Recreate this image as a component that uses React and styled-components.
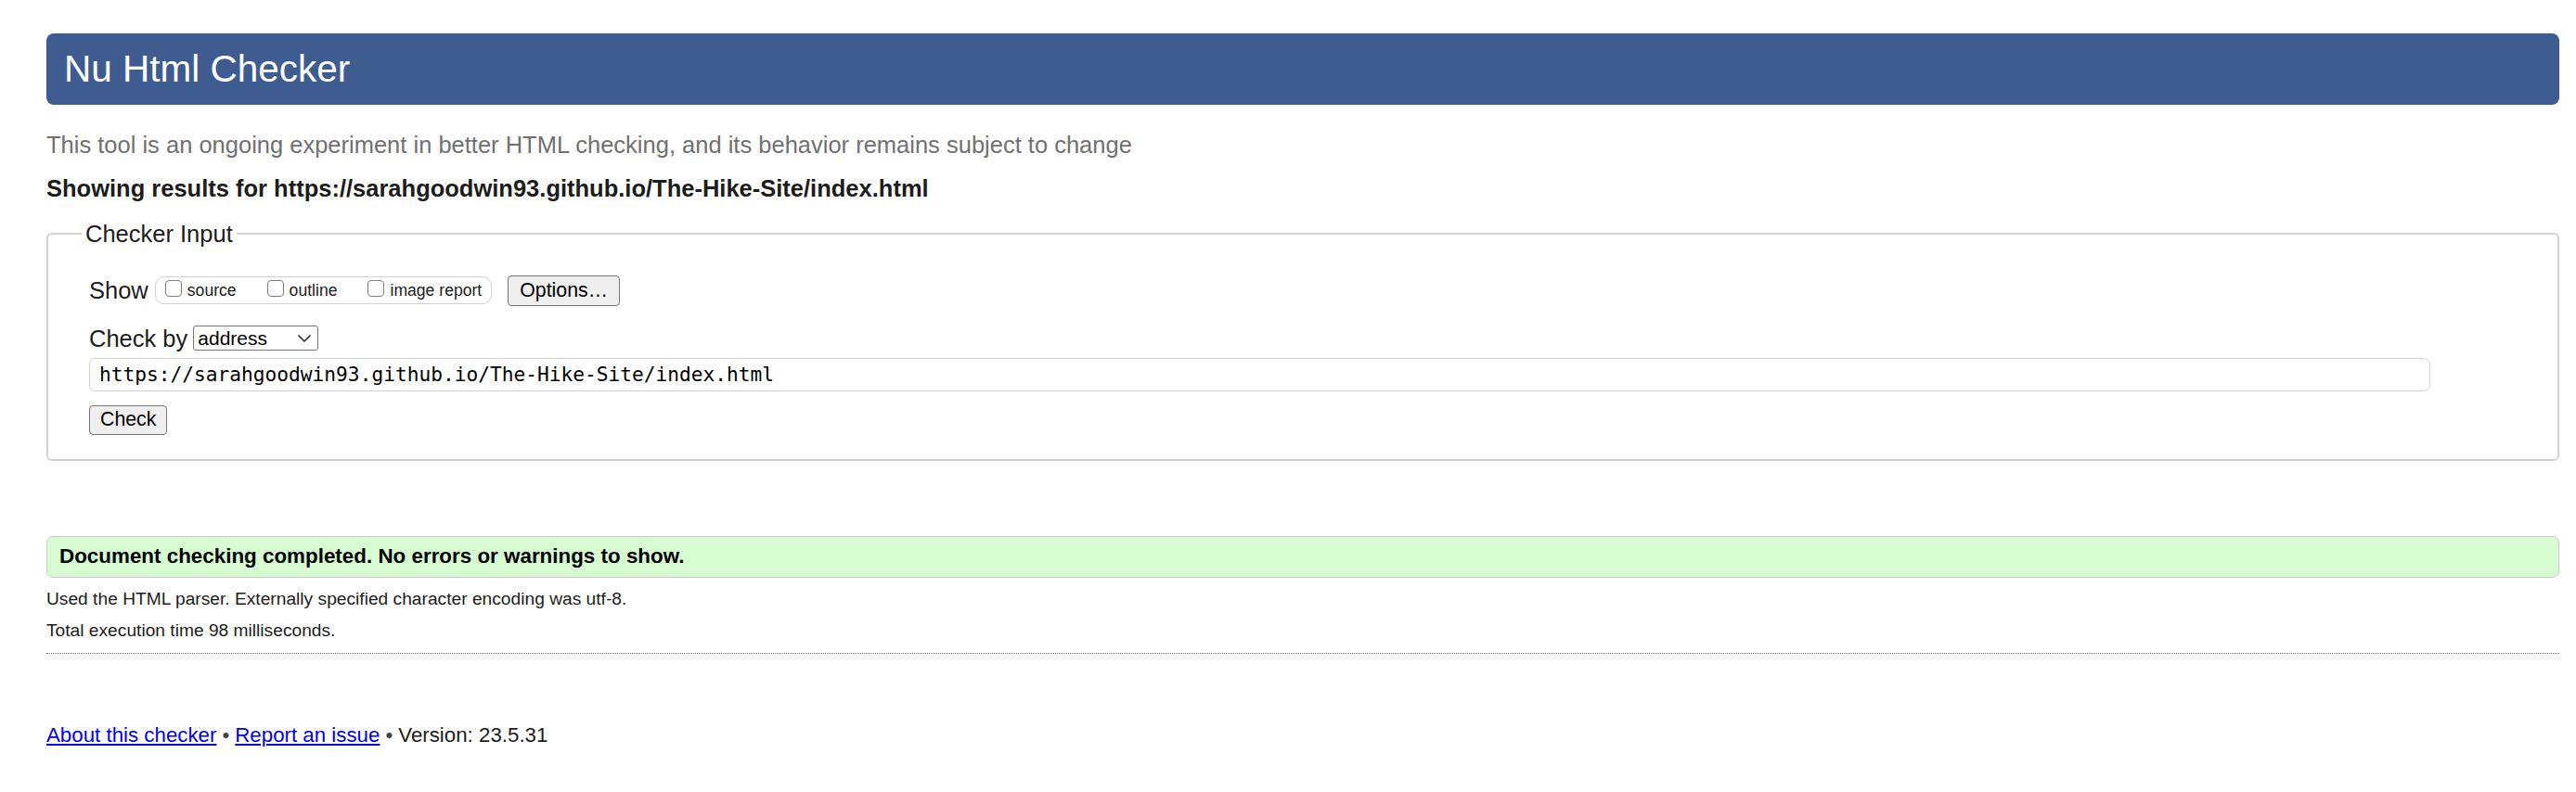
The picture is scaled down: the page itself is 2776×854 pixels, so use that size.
import React from "react";
import styled, { createGlobalStyle } from "styled-components";

const GlobalStyle = createGlobalStyle`
	body {
		margin: 0;
		background: #fff;
		font-family: "Liberation Sans", Arial, Helvetica, sans-serif;
		color: #1c1c1c;
	}
`;

const Page = styled.div`
	padding: 36px 18px 40px 50px;
`;

const Header = styled.h1`
	margin: 0;
	height: 77px;
	display: flex;
	align-items: center;
	padding-left: 19px;
	background: #3e5c8f;
	border-radius: 8px;
	color: #fff;
	font-size: 40.5px;
	font-weight: normal;
`;

const Intro = styled.p`
	margin: 28px 0 0;
	font-size: 25.5px;
	line-height: 30.6px;
	color: #707070;
`;

const Showing = styled.h2`
	margin: 16px 0 0;
	font-size: 25.5px;
	line-height: 30.6px;
	font-weight: bold;
	color: #1c1c1c;
`;

const Fieldset = styled.fieldset`
	margin: 19px 0 0;
	padding: 0 44px 26px 44px;
	border: 2px solid #d2d2d2;
	border-radius: 6px;
	min-width: 0;
`;

const Legend = styled.legend`
	margin-left: -8px;
	padding: 0 4px;
	font-size: 25.5px;
	line-height: 30.6px;
`;

const Row = styled.div`
	display: flex;
	align-items: center;
	gap: ${p => p.$gap || 7}px;
	margin-top: ${p => p.$top || 0}px;
`;

const Label = styled.span`
	font-size: 25.5px;
	line-height: 30px;
`;

const CheckGroup = styled.div`
	display: flex;
	align-items: center;
	height: 28px;
	padding: 0 10px 0 10px;
	border: 1.5px solid #d0d0d0;
	border-radius: 10px;
	margin-right: 10px;
	gap: 33px;
`;

const CheckItem = styled.label`
	display: flex;
	align-items: center;
	gap: 6px;
	font-size: 17.6px;
	color: #1c1c1c;
`;

const Box = styled.input`
	appearance: none;
	width: 18px;
	height: 18px;
	margin: -4px 0 0;
	border: 1.5px solid #7c7c7c;
	border-radius: 4px;
	background: #fff;
`;

const Button = styled.button`
	height: ${p => p.$h || 33}px;
	padding: 0 ${p => p.$px || 12}px;
	font-family: "Liberation Sans", Arial, sans-serif;
	font-size: 21.3px;
	color: #000;
	background: #efefef;
	border: 1.5px solid #767676;
	border-radius: 4px;
`;

const SelectWrap = styled.div`
	position: relative;
	width: 135px;
	height: 27px;
`;

const Select = styled.select`
	appearance: none;
	width: 100%;
	height: 100%;
	padding: 0 0 0 4px;
	font-family: "Liberation Sans", Arial, sans-serif;
	font-size: 21px;
	color: #000;
	background: #fff;
	border: 1.5px solid #767676;
	border-radius: 3px;
`;

const Chevron = styled.svg`
	position: absolute;
	right: 7px;
	top: 9px;
	pointer-events: none;
`;

const UrlInput = styled.input`
	display: block;
	box-sizing: border-box;
	width: calc(100% - 93px);
	height: 36px;
	margin-top: 6px;
	padding: 0 10px;
	font-family: "DejaVu Sans Mono", "Liberation Mono", monospace;
	font-size: 21.2px;
	color: #000;
	border: 1.5px solid #d0d0d0;
	border-radius: 7px;
	outline: none;
`;

const CheckRow = styled.div`
	margin-top: 15px;
`;

const Success = styled.div`
	margin-top: 81px;
	height: 45px;
	box-sizing: border-box;
	display: flex;
	align-items: center;
	padding-left: 13px;
	background: #d7fcd2;
	border: 1.5px solid #c8c8c8;
	border-radius: 7px;
	font-size: 22.4px;
	font-weight: bold;
	color: #000;
`;

const Detail = styled.p`
	margin: ${p => p.$top}px 0 0;
	font-size: 19.2px;
	line-height: 23px;
	color: #1c1c1c;
`;

const Rule = styled.hr`
	margin: 13px 0 0;
	border: none;
	border-top: 1.5px dotted #6a6a6a;
`;

const Footer = styled.p`
	margin: 75px 0 0;
	font-size: 22.3px;
	line-height: 26px;
	color: #1c1c1c;
`;

const Link = styled.a`
	color: #0000ee;
	text-decoration: underline;
`;

const Dot = styled.span`
	color: #444;
	margin: 0 6px;
`;

export default function App() {
	return (
		<>
			<GlobalStyle />
			<Page>
				<Header>Nu Html Checker</Header>
				<Intro>
					This tool is an ongoing experiment in better HTML checking, and its
					behavior remains subject to change
				</Intro>
				<Showing>
					Showing results for https://sarahgoodwin93.github.io/The-Hike-Site/index.html
				</Showing>

				<Fieldset>
					<Legend>Checker Input</Legend>
					<Row $top={29}>
						<Label>Show</Label>
						<CheckGroup>
							<CheckItem>
								<Box type="checkbox" />
								source
							</CheckItem>
							<CheckItem>
								<Box type="checkbox" />
								outline
							</CheckItem>
							<CheckItem>
								<Box type="checkbox" />
								image report
							</CheckItem>
						</CheckGroup>
						<Button>Options…</Button>
					</Row>
					<Row $top={20} $gap={6}>
						<Label>Check by</Label>
						<SelectWrap>
							<Select defaultValue="address">
								<option value="address">address</option>
								<option value="file">file upload</option>
								<option value="text">text input</option>
							</Select>
							<Chevron width="16" height="10" viewBox="0 0 16 10">
								<path
									d="M1.5 1.5 L8 8 L14.5 1.5"
									fill="none"
									stroke="#222"
									strokeWidth="1.5"
								/>
							</Chevron>
						</SelectWrap>
					</Row>
					<UrlInput
						type="url"
						defaultValue="https://sarahgoodwin93.github.io/The-Hike-Site/index.html"
					/>
					<CheckRow>
						<Button $h={32} $px={11}>
							Check
						</Button>
					</CheckRow>
				</Fieldset>

				<Success>Document checking completed. No errors or warnings to show.</Success>
				<Detail $top={11}>
					Used the HTML parser. Externally specified character encoding was utf-8.
				</Detail>
				<Detail $top={11}>Total execution time 98 milliseconds.</Detail>
				<Rule />

				<Footer>
					<Link href="#about">About this checker</Link>
					<Dot>•</Dot>
					<Link href="#issue">Report an issue</Link>
					<Dot>•</Dot>
					Version: 23.5.31
				</Footer>
			</Page>
		</>
	);
}
